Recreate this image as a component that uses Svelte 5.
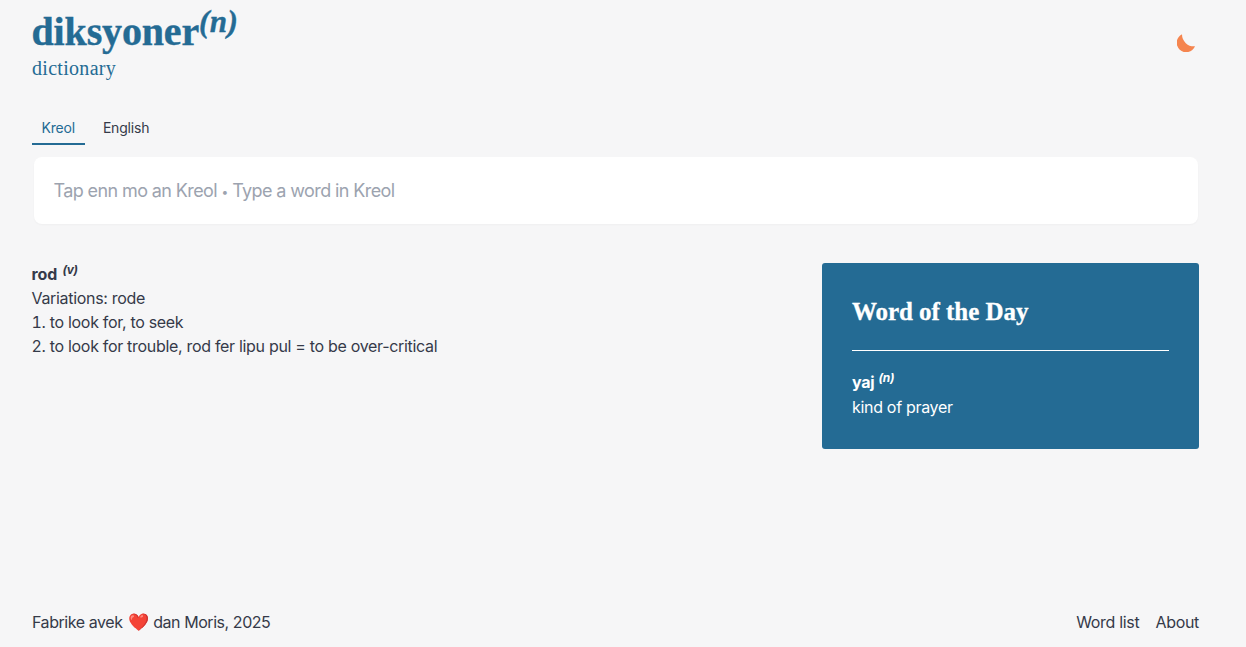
<script>
  let tab = $state('kreol');
  let query = $state('');
</script>

<div class="page">
  <header>
    <div>
      <h1>diksyoner<sup>(n)</sup></h1>
      <p class="sub">dictionary</p>
    </div>
    <button class="theme" aria-label="Toggle theme">
      <svg viewBox="0 0 18 18" width="18" height="18"><path d="M5 .2A9.5 9.5 0 1 0 18 12.3A12 12 0 0 1 5 .2z" fill="#f5854f"/></svg>
    </button>
  </header>

  <nav class="tabs">
    <button class:active={tab === 'kreol'} onclick={() => (tab = 'kreol')}>Kreol</button>
    <button class:active={tab === 'english'} onclick={() => (tab = 'english')}>English</button>
  </nav>

  <div class="search">
    <input bind:value={query} aria-label="Search" />
    {#if !query}
      <span class="hint">Tap enn mo an Kreol <span class="dot">•</span> Type a word in Kreol</span>
    {/if}
  </div>

  <main>
    <section class="entry">
      <div><b>rod</b> <sup>(v)</sup></div>
      <div>Variations: rode</div>
      <div><span class="n">1.</span> to look for, to seek</div>
      <div><span class="n">2.</span> to look for trouble, rod fer lipu pul = to be over-critical</div>
    </section>
    <aside>
      <h2>Word of the Day</h2>
      <hr />
      <div class="wotd"><b>yaj</b> <sup>(n)</sup></div>
      <div>kind of prayer</div>
    </aside>
  </main>

  <footer>
    <span class="credit">Fabrike avek <span class="heart">❤️</span> dan Moris, 2025</span>
    <span class="links"><a href="#list">Word list</a><a href="#about">About</a></span>
  </footer>
</div>

<style>
  :global(body) {
    background: #f6f6f7;
    color: #353a49;
    font-family: Inter, "Liberation Sans", sans-serif;
    font-size: 16px;
    line-height: 24px;
    letter-spacing: -0.31px;
  }
  .page {
    height: 647px;
    padding: 0 47px 0 32px;
    box-sizing: border-box;
    display: flex;
    flex-direction: column;
  }
  header {
    display: flex;
    justify-content: space-between;
    align-items: flex-start;
    height: 116px;
  }
  h1 {
    margin: 12px 0 0 -0.5px;
    font-family: "Liberation Serif", serif;
    font-size: 40px;
    line-height: 40px;
    font-weight: 700;
    letter-spacing: -0.15px;
    color: #246b94;
    -webkit-text-stroke: 0.4px #246b94;
  }
  h1 sup {
    font-style: italic;
    font-size: 31px;
    line-height: 0;
    vertical-align: 13px;
    letter-spacing: 0.4px;
  }
  .sub {
    margin: 2px 0 0;
    font-family: "Liberation Serif", serif;
    font-size: 20px;
    line-height: 28px;
    letter-spacing: 0.3px;
    color: #246b94;
  }
  .theme {
    margin: 34px 4px 0 0;
    padding: 0;
    border: 0;
    background: none;
    line-height: 0;
  }
  .tabs {
    display: flex;
    height: 29px;
  }
  .tabs button {
    padding: 0 10.5px 4px 9.5px;
    margin-right: 8px;
    border: 0;
    border-bottom: 2px solid transparent;
    background: none;
    font: inherit;
    font-size: 14px;
    letter-spacing: -0.2px;
    color: #353a49;
  }
  .tabs button.active {
    color: #246b94;
    border-bottom-color: #246b94;
  }
  .search {
    position: relative;
    margin: 12px 1px 0 2px;
    height: 67px;
    background: #fff;
    border-radius: 8px;
    box-shadow: 0 1px 2px rgba(0, 0, 0, 0.03);
  }
  input {
    width: 100%;
    height: 100%;
    box-sizing: border-box;
    padding: 0 19.5px;
    border: 0;
    background: none;
    outline: none;
    font: inherit;
    font-size: 18px;
    letter-spacing: -0.6px;
  }
  .hint {
    position: absolute;
    left: 19.5px;
    top: 22px;
    font-size: 18px;
    letter-spacing: -0.6px;
    color: #9ca3af;
    pointer-events: none;
  }
  .dot {
    font-size: 12px;
    vertical-align: 1px;
  }
  main {
    margin-top: 39px;
    display: flex;
    justify-content: space-between;
    align-items: flex-start;
  }
  .entry {
    margin-top: -1px;
    margin-left: -0.5px;
  }
  .entry b {
    letter-spacing: -0.1px;
  }
  .entry sup {
    margin-left: 1px;
  }
  .n {
    font-variant-numeric: tabular-nums;
  }
  sup {
    font-size: 12px;
    font-style: italic;
    font-weight: 700;
    line-height: 0;
  }
  aside {
    width: 377px;
    height: 186px;
    box-sizing: border-box;
    padding: 30px;
    background: #246b94;
    color: #fff;
    border-radius: 3px;
  }
  h2 {
    margin: 0;
    padding-top: 1px;
    font-family: "Liberation Serif", serif;
    font-size: 25px;
    line-height: 36px;
    letter-spacing: -0.05px;
    -webkit-text-stroke: 0.3px #fff;
  }
  hr {
    margin: 20px 0 19px;
    border: 0;
    border-top: 1px solid #fff;
  }
  .wotd {
    margin-bottom: 1px;
  }
  footer {
    margin-top: auto;
    height: 37px;
    display: flex;
    justify-content: space-between;
  }
  .credit {
    letter-spacing: -0.44px;
  }
  .heart {
    font-size: 17px;
    margin: 0 1px;
  }
  .links a {
    margin-left: 16px;
    color: inherit;
    text-decoration: none;
  }
</style>
